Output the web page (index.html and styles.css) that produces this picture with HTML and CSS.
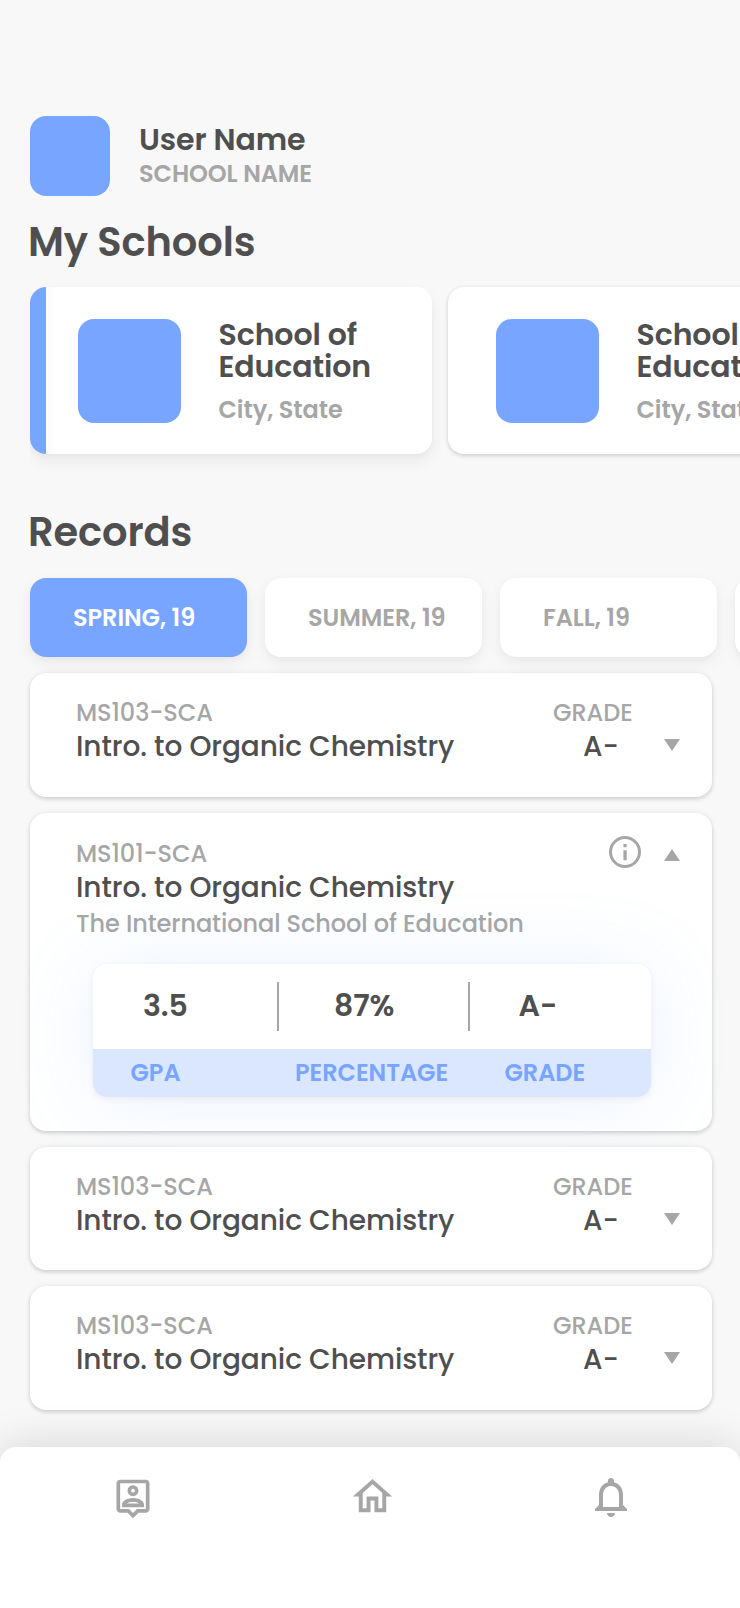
FILE: index.html
```
<!DOCTYPE html>
<html lang="en">
<head>
<meta charset="utf-8">
<title>School Records</title>
<link rel="stylesheet" href="styles.css">
</head>
<body>
<main class="screen">
  <header class="profile">
    <div class="avatar"></div>
    <div class="who">
      <div class="name">User Name</div>
      <div class="school">SCHOOL NAME</div>
    </div>
  </header>

  <h1 class="heading">My Schools</h1>
  <section class="schools">
    <article class="school-card active">
      <div class="logo"></div>
      <div class="about">
        <div class="title">School of<br>Education</div>
        <div class="place">City, State</div>
      </div>
    </article>
    <article class="school-card">
      <div class="logo"></div>
      <div class="about">
        <div class="title">School of<br>Education</div>
        <div class="place">City, State</div>
      </div>
    </article>
  </section>

  <h1 class="heading records-heading">Records</h1>
  <nav class="terms">
    <div class="term selected">SPRING, 19</div>
    <div class="term">SUMMER, 19</div>
    <div class="term">FALL, 19</div>
    <div class="term"></div>
  </nav>

  <section class="records">
    <article class="record">
      <div class="course">
        <div class="code">MS103-SCA</div>
        <div class="subject">Intro. to Organic Chemistry</div>
      </div>
      <div class="result">
        <div class="code">GRADE</div>
        <div class="subject mark">A-</div>
      </div>
      <svg class="caret" viewBox="0 0 16 12"><path d="M0 0h16L8 12z"/></svg>
    </article>

    <article class="record open">
      <div class="course">
        <div class="code">MS101-SCA</div>
        <div class="subject">Intro. to Organic Chemistry</div>
        <div class="origin">The International School of Education</div>
      </div>
      <svg class="info" viewBox="0 0 32 32"><circle cx="16" cy="16" r="14.5"/><path d="M14.4 8h3.3v3.3h-3.3zM14.4 14.3h3.3v10h-3.3z"/></svg>
      <svg class="caret up" viewBox="0 0 16 12"><path d="M0 12h16L8 0z"/></svg>
      <div class="stats">
        <div class="values">
          <div class="v-gpa">3.5</div>
          <div class="v-pct">87%</div>
          <div class="v-grade">A-</div>
        </div>
        <div class="labels">
          <div class="l-gpa">GPA</div>
          <div class="l-pct">PERCENTAGE</div>
          <div class="l-grade">GRADE</div>
        </div>
      </div>
    </article>

    <article class="record">
      <div class="course">
        <div class="code">MS103-SCA</div>
        <div class="subject">Intro. to Organic Chemistry</div>
      </div>
      <div class="result">
        <div class="code">GRADE</div>
        <div class="subject mark">A-</div>
      </div>
      <svg class="caret" viewBox="0 0 16 12"><path d="M0 0h16L8 12z"/></svg>
    </article>

    <article class="record">
      <div class="course">
        <div class="code">MS103-SCA</div>
        <div class="subject">Intro. to Organic Chemistry</div>
      </div>
      <div class="result">
        <div class="code">GRADE</div>
        <div class="subject mark">A-</div>
      </div>
      <svg class="caret" viewBox="0 0 16 12"><path d="M0 0h16L8 12z"/></svg>
    </article>
  </section>

  <footer class="tabbar">
    <svg class="tab contact" viewBox="0 0 24 24"><path fill-rule="evenodd" d="M5 2h14c1.1 0 2 .9 2 2v14c0 1.1-.9 2-2 2h-4l-3 3-3-3H5c-1.1 0-2-.9-2-2V4c0-1.1.9-2 2-2zm0 2v14h4.830L12 20.170 14.170 18H19V4zM12 5a3 3 0 1 1 0 6 3 3 0 0 1 0-6zm0 2a1 1 0 1 0 0 2 1 1 0 0 0 0-2zM6 15.580C6 13.080 9.970 12 12 12s6 1.080 6 3.580V17H6zM8.480 15h7.040C14.830 14.490 13.310 14 12 14s-2.840.490-3.520 1z"/></svg>
    <svg class="tab home" viewBox="0 0 24 24"><path d="M12 5.690l5 4.500V18h-2v-6H9v6H7v-7.810l5-4.500M12 3L2 12h3v8h6v-6h2v6h6v-8h3L12 3z"/></svg>
    <svg class="tab bell" viewBox="0 0 24 24"><path d="M12 22c1.100 0 2-.9 2-2h-4c0 1.100.9 2 2 2zm6-6v-5c0-3.070-1.630-5.640-4.500-6.320V4c0-.83-.67-1.500-1.500-1.500s-1.500.67-1.500 1.500v.68C7.640 5.360 6 7.920 6 11v5l-2 2v1h16v-1l-2-2zm-2 1H8v-6c0-2.480 1.510-4.500 4-4.500s4 2.020 4 4.500v6z"/></svg>
  </footer>
</main>
</body>
</html>
```
FILE: styles.css
```
* { box-sizing: border-box; }
body {
  margin: 0;
  background: #f8f8f8;
  color: #4f4f4f;
  font-family: Poppins, Inter, "Open Sans", sans-serif;
  letter-spacing: -0.07px;
}
.screen {
  width: 740px;
  height: 1608px;
  padding-top: 116px;
  overflow: hidden;
  display: flex;
  flex-direction: column;
}
.profile { display: flex; height: 80px; margin-left: 29.5px; gap: 29.5px; flex: none; }
.avatar { width: 80px; height: 80px; border-radius: 16px; background: #78a5ff; }
.who { padding-top: 6px; }
.name { font-size: 30px; line-height: 36px; font-weight: 600; letter-spacing: -0.1px; }
.school { font-size: 24px; line-height: 32px; font-weight: 600; color: #a6a6a6; }
.heading { margin: 21.5px 0 0 28px; font-size: 40px; line-height: 48px; font-weight: 600; letter-spacing: -0.12px; flex: none; }
.records-heading { margin-top: 54px; }
.schools { display: flex; gap: 16px; margin: 21.5px 0 0 30px; flex: none; }
.school-card {
  flex: none;
  width: 402px;
  height: 167px;
  padding: 31px 0 0 47.500px;
  display: flex;
  gap: 37.500px;
  background: #fff;
  border-radius: 16px;
  white-space: nowrap;
  box-shadow: 0 2px 4px rgba(0,0,0,.15), 0 0 4px rgba(0,0,0,.05);
}
.school-card.active {
  background: linear-gradient(90deg, #78a5ff 16px, #fafafa 16px, #fff 28px);
  box-shadow: 0 8px 16px rgba(0,0,0,.06), 0 2px 5px rgba(0,0,0,.03);
  clip-path: inset(-20px -20px -18px 0);
}
.logo { width: 103.5px; height: 103.5px; margin-top: 1px; border-radius: 16px; background: #78a5ff; }
.about { padding-top: 1px; }
.title { font-size: 30px; line-height: 32px; font-weight: 600; letter-spacing: -0.1px; }
.place { margin-top: 11px; font-size: 24px; line-height: 32px; font-weight: 600; color: #a6a6a6; }
.terms { display: flex; gap: 18px; margin: 22px 0 0 30px; flex: none; }
.term {
  flex: none;
  width: 217px;
  height: 79px;
  padding-left: 43px;
  border-radius: 16px;
  background: #fff;
  color: #a6a6a6;
  font-size: 24px;
  line-height: 79px;
  font-weight: 600;
  box-shadow: 0 6px 16px rgba(0,0,0,.05), 0 2px 6px rgba(0,0,0,.03);
}
.term.selected { background: #78a5ff; color: #fff; }
.records { margin: 16px 28px 0 30px; display: flex; flex-direction: column; gap: 16px; flex: none; }
.record {
  height: 123.5px;
  padding: 24px 32px 0 46px;
  display: flex;
  background: #fff;
  border-radius: 16px;
  white-space: nowrap;
  box-shadow: 0 2px 4px rgba(0,0,0,.15), 0 0 6px rgba(0,0,0,.06);
}
.course { flex: 1; min-width: 0; }
.code, .origin { font-size: 24px; line-height: 32px; font-weight: 500; color: #a6a6a6; }
.subject { font-size: 28px; line-height: 36px; font-weight: 500; letter-spacing: -0.08px; }
.origin { margin-top: 2px; }
.result { width: 111px; flex: none; }
.mark { padding-left: 30px; }
.caret { width: 16px; height: 12px; margin-top: 42px; fill: #a6a6a6; flex: none; }
.record.open { height: 318px; flex-wrap: wrap; align-content: flex-start; padding-top: 25px; }
.info { width: 32px; height: 32px; margin: -1.5px 23.500px 0 0; fill: #a6a6a6; flex: none; }
.info circle { fill: none; stroke: #a6a6a6; stroke-width: 3; }
.caret.up { margin-top: 11px; }
.stats {
  width: 558px;
  height: 133px;
  margin: 24px 0 0 17px;
  border-radius: 14px;
  overflow: hidden;
  background: #fff;
  box-shadow: 0 4px 80px rgba(120,165,255,.15), 0 2px 6px rgba(0,0,0,.06);
}
.values { display: grid; grid-template-columns: 184px 190.5px 1fr; height: 85.5px; font-size: 30px; line-height: 83px; font-weight: 600; letter-spacing: -0.1px; }
.labels { display: grid; grid-template-columns: 202px 209.5px 1fr; height: 47.5px; background: #dbe7ff; color: #78a5ff; font-size: 24px; line-height: 47px; font-weight: 600; }
.v-gpa { padding-left: 50px; }
.v-pct { padding-left: 57px; }
.v-grade { padding-left: 51px; }
.v-pct, .v-grade { background: linear-gradient(#a6a6a6, #a6a6a6) 0 18px / 2px 49px no-repeat; }
.l-gpa { padding-left: 37.5px; }
.tabbar {
  position: relative;
  display: flex;
  flex: none;
  height: 161.5px;
  margin-top: auto;
  background: #fff;
  border-radius: 16px 16px 0 0;
  box-shadow: 0 -4px 40px rgba(0,0,0,.13);
}
.tab { fill: #a6a6a6; flex: none; }
.contact { width: 44px; height: 44px; margin: 29.5px 0 0 111px; }
.home { width: 47px; height: 47px; margin: 26.5px 0 0 193.5px; }
.bell { width: 48px; height: 48px; margin: 26.5px 0 0 191.500px; }
```
